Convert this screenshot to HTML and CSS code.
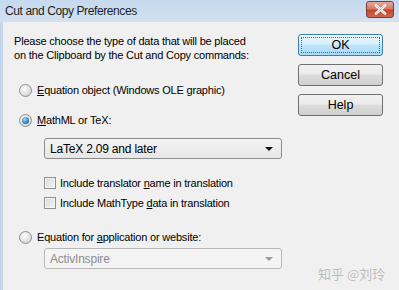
FILE: index.html
```html
<!DOCTYPE html>
<html lang="en">
<head>
  <meta charset="UTF-8" />
  <title>Cut and Copy Preferences</title>
  <link rel="stylesheet" href="styles.css">
</head>
<body>
  <div class="window">
    <div class="titlebar">
      <span class="title">Cut and Copy Preferences</span>
      <span class="close-btn">
        <svg width="13" height="11" viewBox="0 0 13 11">
          <path d="M2 1.5 L11 9.5 M11 1.5 L2 9.5" stroke="#fff" stroke-width="2.6" stroke-linecap="round" />
          <path d="M2 1.5 L11 9.5 M11 1.5 L2 9.5" stroke="#6b1b10" stroke-width="0.6" fill="none" opacity="0.5" />
        </svg>
      </span>
    </div>

    <div class="dialog">
      <div class="main">
        <p class="intro">Please choose the type of data that will be placed<br>on the Clipboard by the Cut and Copy commands:</p>

        <label class="option opt-first">
          <span class="radio"></span>
          <span><u>E</u>quation object (Windows OLE graphic)</span>
        </label>

        <label class="option opt-second">
          <span class="radio checked"></span>
          <span><u>M</u>athML or TeX:</span>
        </label>

        <div class="combo">
          <span>LaTeX 2.09 and later</span>
          <span class="arrow"></span>
        </div>

        <label class="check">
          <span class="box"></span>
          <span>Include translator <u>n</u>ame in translation</span>
        </label>
        <label class="check">
          <span class="box"></span>
          <span>Include MathType <u>d</u>ata in translation</span>
        </label>

        <label class="option opt-third">
          <span class="radio"></span>
          <span>Equation for <u>a</u>pplication or website:</span>
        </label>

        <div class="combo disabled">
          <span>ActivInspire</span>
          <span class="arrow"></span>
        </div>
      </div>

      <div class="buttons">
        <button class="btn default">OK</button>
        <button class="btn">Cancel</button>
        <button class="btn">Help</button>
        <div class="watermark">知乎 @刘玲</div>
      </div>
    </div>
  </div>
</body>
</html>
```

FILE: styles.css
```css
body {
  margin: 0;
  width: 399px;
  height: 290px;
  overflow: hidden;
  background: #f0f0f0;
  font-family: "Liberation Sans", Arial, sans-serif;
  font-size: 11px;
  letter-spacing: -0.2px;
  color: #000;
}

.window {
  height: 290px;
  border-left: 3px solid #c3d6ec;
  background: #f0f0f0;
}

.titlebar {
  height: 22px;
  display: flex;
  align-items: center;
  justify-content: space-between;
  background: linear-gradient(to bottom, #c6d9ee, #d3e1f1);
  margin-left: -3px;
  padding-left: 5px;
  padding-right: 5px;
}

.title {
  font-family: "Liberation Sans", Arial, sans-serif;
  font-size: 12px;
  letter-spacing: -0.4px;
  color: #1e1e1e;
  margin-top: -1px;
}

.close-btn {
  width: 26px;
  height: 15px;
  margin-top: -4px;
  border: 1px solid #7a3b35;
  border-radius: 3px;
  background: linear-gradient(to bottom, #e9a99b 0%, #d47a68 45%, #c0452c 55%, #d0694f 100%);
  display: flex;
  align-items: center;
  justify-content: center;
}

.dialog {
  display: flex;
  padding: 12px 16px 0 11px;
}

.main {
  flex: 1;
}

.intro {
  margin: 0;
  line-height: 14px;
}

.option {
  display: flex;
  align-items: center;
  gap: 5px;
  margin-left: 5px;
  height: 16px;
}

.opt-first {
  margin-top: 20px;
}

.opt-second {
  margin-top: 14px;
}

.opt-third {
  margin-top: 18px;
}

.radio {
  width: 11px;
  height: 11px;
  border-radius: 50%;
  border: 1px solid #8f8f8f;
  background: radial-gradient(circle at 40% 35%, #fdfdfd, #d8d8d8 70%, #c6c6c6);
  position: relative;
}

.radio.checked::after {
  content: "";
  position: absolute;
  left: 2px;
  top: 2px;
  width: 7px;
  height: 7px;
  border-radius: 50%;
  background: radial-gradient(circle at 40% 35%, #a8dcf6, #2a7ec2 60%, #1a4f8a);
}

.combo {
  margin: 10px 0 0 30px;
  width: 223px;
  height: 19px;
  border: 1px solid #8c8c8c;
  border-radius: 3px;
  background: linear-gradient(to bottom, #f4f4f4, #e6e6e6);
  display: flex;
  align-items: center;
  justify-content: space-between;
  padding: 0 8px 0 5px;
  box-sizing: content-box;
  font-size: 12px;
}

.arrow {
  width: 0;
  height: 0;
  border-left: 4px solid transparent;
  border-right: 4px solid transparent;
  border-top: 4px solid #111;
}

.combo.disabled {
  margin-top: 3px;
  color: #8d8d8d;
  border-color: #b8b8b8;
  background: #f4f4f4;
}

.combo.disabled .arrow {
  border-top-color: #9a9a9a;
}

.check {
  display: flex;
  align-items: center;
  gap: 4px;
  margin-left: 30px;
  height: 16px;
  margin-top: 4px;
}

.combo + .check {
  margin-top: 16px;
}

.box {
  width: 10px;
  height: 10px;
  border: 1px solid #8e8f8f;
  background: linear-gradient(135deg, #d9d9d9, #f4f4f4);
  box-shadow: inset 0 0 0 1px #f4f4f4;
}

.buttons {
  width: 85px;
  display: flex;
  flex-direction: column;
  gap: 8px;
}

.btn {
  width: 85px;
  height: 22px;
  border: 1px solid #707070;
  border-radius: 3px;
  background: linear-gradient(to bottom, #f2f2f2 0%, #ebebeb 45%, #dddddd 50%, #cfcfcf 100%);
  font-family: "Liberation Sans", Arial, sans-serif;
  font-size: 12.5px;
  color: #000;
  padding: 0;
}

.btn.default {
  border-color: #3c7fb1;
  background: linear-gradient(to bottom, #eaf6fd 0%, #d9f0fc 45%, #bee6fd 50%, #a7d9f5 100%);
  outline: 1px dotted #2c6aa0;
  outline-offset: -4px;
}

.watermark {
  margin-top: 140px;
  margin-left: 20px;
  font-family: "Noto Sans CJK SC", sans-serif;
  font-size: 13px;
  letter-spacing: 0;
  color: #b9b9b9;
  text-shadow: 0 0 1px #fff;
  white-space: nowrap;
}
```
